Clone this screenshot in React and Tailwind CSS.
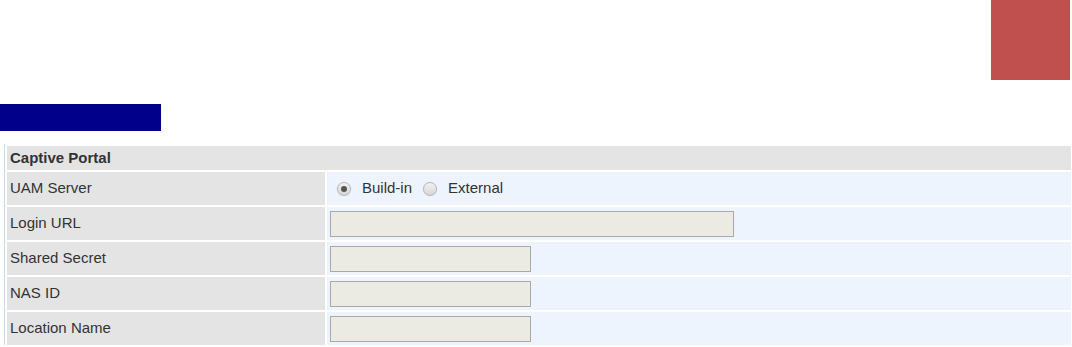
import React from 'react';

const ROWS = [
  { label: 'Login URL', width: 'w-[404px]' },
  { label: 'Shared Secret', width: 'w-[201px]' },
  { label: 'NAS ID', width: 'w-[201px]' },
  { label: 'Location Name', width: 'w-[201px]' },
];

const Radio = ({ checked }) => (
  <span className="inline-flex h-[14px] w-[14px] shrink-0 items-center justify-center rounded-full border border-[#b8b8b8] bg-gradient-to-b from-[#f2f2f2] to-[#d6d6d6] shadow-[0_0_1px_rgba(0,0,0,0.15)]">
    {checked && <span className="h-[6px] w-[6px] rounded-full bg-[#555555]" />}
  </span>
);

const App = () => {
  return (
    <div className="h-[347px] w-[1072px] overflow-hidden bg-white font-['Liberation_Sans',Arial,sans-serif] text-[15px] text-[#333333]">
      {/* top bar with red block */}
      <div className="flex h-[80px] justify-end pr-[2px]">
        <div className="h-[80px] w-[79px] bg-[#c0504d]" />
      </div>

      <div className="mt-[24px] h-[27px] w-[161px] bg-[#00008b]" />

      {/* Captive Portal table */}
      <div className="mt-[13px] ml-[4px] mr-[1px] border-l border-[#c8daf1] pt-[2px] pl-[2px]">
        <div className="grid grid-cols-[318px_1fr] gap-[2px]">
          <div className="col-span-2 flex h-[24px] items-center bg-[#e4e4e4] pl-[3px] font-bold">
            Captive Portal
          </div>

          <div className="flex h-[33px] items-center bg-[#e4e4e4] pl-[3px]">UAM Server</div>
          <div className="flex h-[33px] items-center bg-[#edf4fe] pl-[10px]">
            <Radio checked />
            <span className="ml-[11px]">Build-in</span>
            <span className="ml-[11px] flex"><Radio /></span>
            <span className="ml-[11px]">External</span>
          </div>

          {ROWS.map(row => (
            <React.Fragment key={row.label}>
              <div className="flex h-[33px] items-center bg-[#e4e4e4] pl-[3px]">{row.label}</div>
              <div className="flex h-[33px] items-center bg-[#edf4fe] pl-[3px]">
                <input
                  type="text"
                  className={`${row.width} h-[26px] border border-[#a9a9a9] bg-[#ebeae3] outline-none`}
                />
              </div>
            </React.Fragment>
          ))}
        </div>
      </div>
    </div>
  );
};

export default App;
